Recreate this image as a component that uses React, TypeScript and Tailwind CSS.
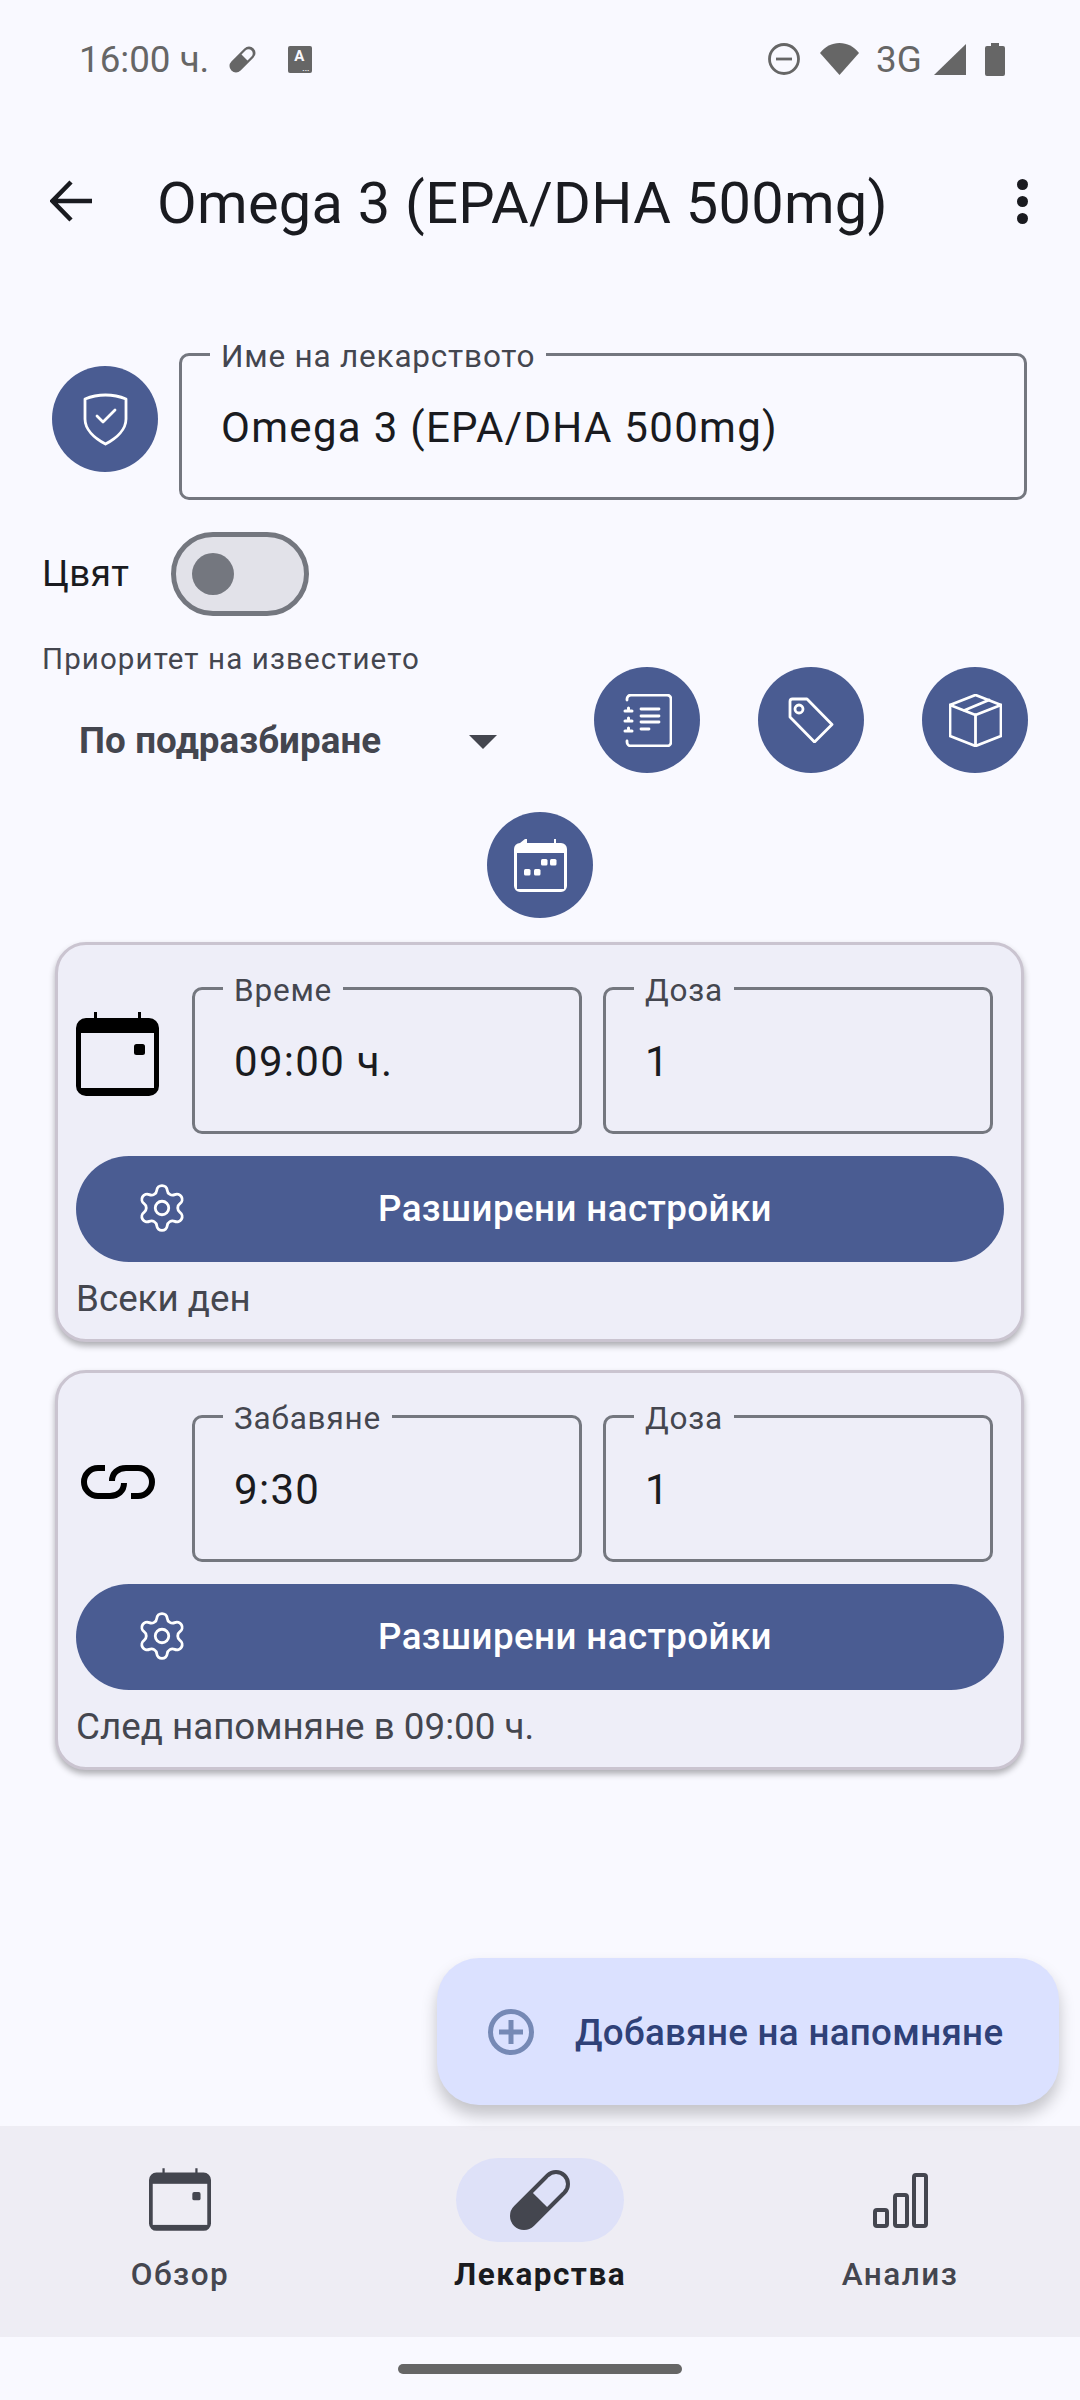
import { ReactNode } from 'react';
import { Settings } from 'lucide-react';

function CircleBtn({ children }: { children: ReactNode }) {
  return (
    <div className="flex h-[106px] w-[106px] shrink-0 items-center justify-center rounded-full bg-[#4a5c92]">
      {children}
    </div>
  );
}

function OutlinedField({ label, value, className, labelBg }: { label: string; value: string; className: string; labelBg: string }) {
  return (
    <div className={`relative flex h-[147px] items-center rounded-[10px] border-[3px] border-[#74777f] pl-[39px] pt-[2px] text-[42px] tracking-[1.3px] text-[#1a1b20] ${className}`}>
      <span className={`absolute left-[28px] top-[-19px] px-[11px] text-[31.5px] leading-[40px] tracking-[0.8px] text-[#44464f] ${labelBg}`}>{label}</span>
      {value}
    </div>
  );
}

function CalendarIcon({ className, color, inner }: { className: string; color: string; inner: string }) {
  return (
    <svg viewBox="0 0 83 84" className={className} fill="none">
      <path d="M18 0h3v6h41V0h3v6h8a10 10 0 0 1 10 10v58a10 10 0 0 1-10 10H10A10 10 0 0 1 0 74V16A10 10 0 0 1 10 6h8z" fill={color} />
      <rect x="5" y="21" width="73" height="55" fill={inner} />
      <rect x="58" y="32" width="11" height="11" rx="2.5" fill={color} />
    </svg>
  );
}

function GearBtn() {
  return (
    <div className="relative flex h-[106px] w-[928px] items-center justify-center rounded-full bg-[#4a5c92] pl-[70px] text-[36.75px] font-medium tracking-[0.4px] text-white">
      <Settings size={54} strokeWidth={1.25} className="absolute left-[59px] top-[25px]" />
      Разширени настройки
    </div>
  );
}

function ReminderCard({ icon, label, value, note }: { icon: ReactNode; label: string; value: string; note: string }) {
  return (
    <div className="ml-[55px] h-[400px] w-[969px] rounded-[31px] border-[3px] border-[#cac4d0] bg-[#eeeef8] pl-[18px] pt-[42px] shadow-[0_4px_6px_rgba(0,0,0,0.3)]">
      <div className="flex items-center">
        <div className="mb-[14px] flex w-[116px] shrink-0 justify-start">{icon}</div>
        <OutlinedField label={label} value={value} className="w-[390px]" labelBg="bg-[#eeeef8]" />
        <OutlinedField label="Доза" value="1" className="ml-[21px] w-[390px]" labelBg="bg-[#eeeef8]" />
      </div>
      <div className="mt-[22px]">
        <GearBtn />
      </div>
      <div className="mt-[13px] text-[36.75px] leading-[48px] text-[#44464f]">{note}</div>
    </div>
  );
}

function NavItem({ children, label, active }: { children: ReactNode; label: string; active?: boolean }) {
  return (
    <div className="flex flex-col items-center">
      <div className={`flex h-[84px] w-[168px] items-center justify-center rounded-full ${active ? 'bg-[#dee1f8]' : ''}`}>{children}</div>
      <div className={`mt-[13px] text-[31.5px] leading-[40px] tracking-[1.5px] ${active ? 'font-bold text-[#1a1b20]' : 'font-medium text-[#44464f]'}`}>{label}</div>
    </div>
  );
}

export default function App() {
  return (
    <div className="relative flex h-[2400px] w-[1080px] flex-col overflow-hidden bg-[#f9f9ff] font-['Roboto',sans-serif]">
      {/* status bar */}
      <div className="flex h-[118px] items-center pl-[79px] pr-[75px] text-[#666666]">
        <span className="pt-[2px] text-[36.75px] leading-none">16:00 ч.</span>
        <svg viewBox="0 0 27 27" className="ml-[20px] h-[27px] w-[27px]" fill="none">
          <path d="M7 20 20 7" stroke="#666666" strokeWidth="13" strokeLinecap="round" />
          <path d="M16.5 4.500a4.200 4.200 0 0 1 6 6l-4 4-6-6z" fill="#f9f9ff" />
        </svg>
        <div className="relative ml-[32px] h-[27px] w-[24px] rounded-[2px] bg-[#666666]">
          <span className="absolute left-[6px] top-[2px] text-[15px] font-bold leading-[17px] text-[#f9f9ff]">A</span>
          <span className="absolute bottom-[1px] right-[3px] text-[8px] font-bold leading-[6px] text-[#f9f9ff]">...</span>
        </div>
        <div className="ml-auto flex items-center">
          <svg viewBox="0 0 32 32" className="h-[32px] w-[32px]" fill="none" stroke="#666666" strokeWidth="2.8">
            <circle cx="16" cy="16" r="14.5" />
            <path d="M8 16h16" />
          </svg>
          <svg viewBox="0 0 39 32" className="ml-[20px] h-[32px] w-[39px]" fill="#666666">
            <path d="M0 10C5 3.500 12 0 19.500 0S34 3.500 39 10L19.500 32z" />
          </svg>
          <span className="ml-[17px] w-[48px] pt-[2px] text-[36.75px] leading-none">3G</span>
          <svg viewBox="0 0 32 31" className="ml-[10px] h-[31px] w-[32px]" fill="#666666">
            <path d="M32 0v31H0z" />
          </svg>
          <svg viewBox="0 0 20 33" className="ml-[19px] h-[33px] w-[20px]" fill="#666666">
            <path d="M6 0h8v3h4a2 2 0 0 1 2 2v26a2 2 0 0 1-2 2H2a2 2 0 0 1-2-2V5a2 2 0 0 1 2-2h4z" />
          </svg>
        </div>
      </div>

      {/* top bar */}
      <div className="flex h-[172px] items-center pl-[50px] pr-[50px] text-[#1a1b20]">
        <svg viewBox="0 0 42 42" className="mb-[6px] h-[42px] w-[42px]" fill="none" stroke="#1a1b20" strokeWidth="4.500">
          <path d="M42 21H4M21 2 2.500 21 21 40" />
        </svg>
        <span className="ml-[65px] text-[57.75px] leading-none tracking-[0.27px]">Omega 3 (EPA/DHA 500mg)</span>
        <div className="mb-[6px] ml-auto flex flex-col gap-[6px] pr-[2px]">
          <div className="h-[11px] w-[11px] rounded-full bg-[#1a1b20]" />
          <div className="h-[11px] w-[11px] rounded-full bg-[#1a1b20]" />
          <div className="h-[11px] w-[11px] rounded-full bg-[#1a1b20]" />
        </div>
      </div>

      {/* name */}
      <div className="mt-[63px] flex items-start pl-[52px]">
        <div className="mt-[13px]">
          <CircleBtn>
            <svg viewBox="0 0 45 53" className="h-[53px] w-[45px]" fill="none" stroke="#fff" strokeWidth="2.800" strokeLinecap="round" strokeLinejoin="round">
              <path d="M22.500 2C30 2 37 3.500 43 6v20c0 10-9 19-20.500 25C11 45 2 36 2 26V6c6-2.500 13-4 20.500-4z" />
              <path d="m14 23 6 6 12-12" />
            </svg>
          </CircleBtn>
        </div>
        <OutlinedField label="Име на лекарството" value="Omega 3 (EPA/DHA 500mg)" className="ml-[21px] w-[848px]" labelBg="bg-[#f9f9ff]" />
      </div>

      {/* colour switch */}
      <div className="mt-[32px] flex items-center pl-[42px]">
        <span className="w-[129px] text-[36.75px] tracking-[0.4px] text-[#1a1b20]">Цвят</span>
        <div className="flex h-[84px] w-[138px] items-center rounded-full border-[5px] border-[#74777f] bg-[#e2e2e9] pl-[16px]">
          <div className="h-[42px] w-[42px] rounded-full bg-[#74777f]" />
        </div>
      </div>

      {/* priority + actions */}
      <div className="mt-[23px] flex items-start">
        <div className="w-[594px] pl-[42px]">
          <div className="text-[29.5px] leading-[40px] tracking-[1.1px] text-[#44464f]">Приоритет на известието</div>
          <div className="mt-[42px] flex h-[40px] items-center pl-[37px]">
            <span className="text-[36.75px] font-bold leading-[40px] tracking-[0.1px] text-[#44464f]">По подразбиране</span>
            <div className="ml-[88px] mt-[1px] h-0 w-0 border-x-[14px] border-t-[14px] border-x-transparent border-t-[#44464f]" />
          </div>
        </div>
        <div className="mt-[28px] flex gap-[58px]">
          <CircleBtn>
            <svg viewBox="0 0 49 53" className="h-[53px] w-[49px]" fill="none" stroke="#fff" strokeWidth="2.800" strokeLinecap="round" strokeLinejoin="round">
              <path d="M4 6V5a4 4 0 0 1 4-4h36a4 4 0 0 1 4 4v43a4 4 0 0 1-4 4H8a4 4 0 0 1-4-4v-1" />
              <path d="M18 15h18M18 22h18M18 28h18M18 35h8" />
              <path d="M2 17h7M2 27h7M2 37h7M5.500 14v1M5.500 24v1M5.500 34v1" strokeWidth="3" />
            </svg>
          </CircleBtn>
          <CircleBtn>
            <svg viewBox="0 0 46 46" className="h-[46px] w-[46px]" fill="none" stroke="#fff" strokeWidth="2.800" strokeLinecap="round" strokeLinejoin="round">
              <path d="M2 4.500a2.500 2.500 0 0 1 2.500-2.500H19l25 25.500L26.500 45 2 20z" />
              <circle cx="11" cy="12" r="4" />
            </svg>
          </CircleBtn>
          <CircleBtn>
            <svg viewBox="0 0 53 53" className="h-[53px] w-[53px]" fill="none" stroke="#fff" strokeWidth="2.800" strokeLinecap="round" strokeLinejoin="round">
              <path d="M26.500 1 52 11v31L26.500 52 1 42V11z" />
              <path d="m1 11 25.500 10L52 11M26.500 21v31M15 16.500 40 6" />
            </svg>
          </CircleBtn>
        </div>
      </div>

      {/* schedule */}
      <div className="mt-[39px] flex justify-center">
        <CircleBtn>
          <svg viewBox="0 0 53 53" className="h-[53px] w-[53px]" fill="none">
            <path d="M11 0h2v4h27V0h2v4h5a6 6 0 0 1 6 6v37a6 6 0 0 1-6 6H6a6 6 0 0 1-6-6V10a6 6 0 0 1 6-6z" fill="#fff" />
            <rect x="3" y="14" width="47" height="36" fill="#4a5c92" />
            <rect x="10" y="30" width="6.500" height="6.500" rx="1.500" fill="#fff" />
            <rect x="20" y="30" width="6.500" height="6.500" rx="1.500" fill="#fff" />
            <rect x="27" y="20" width="6.500" height="6.500" rx="1.500" fill="#fff" />
            <rect x="36" y="20" width="6.500" height="6.500" rx="1.500" fill="#fff" />
          </svg>
        </CircleBtn>
      </div>

      {/* reminders */}
      <div className="mt-[24px] flex flex-col gap-[28px]">
        <ReminderCard
          icon={<CalendarIcon className="h-[84px] w-[83px]" color="#000" inner="#eeeef8" />}
          label="Време"
          value="09:00 ч."
          note="Всеки ден"
        />
        <ReminderCard
          icon={
            <svg viewBox="0 0 74 34" className="ml-[5px] h-[34px] w-[74px]" fill="none" stroke="#000" strokeWidth="6">
              <path d="M24 3H17a14 14 0 0 0 0 28h12c8 0 14-5 14-13M50 31h7a14 14 0 0 0 0-28H45c-8 0-14 5-14 13" />
            </svg>
          }
          label="Забавяне"
          value="9:30"
          note="След напомняне в 09:00 ч."
        />
      </div>

      {/* bottom nav */}
      <div className="mt-auto grid h-[211px] grid-cols-3 bg-[#eeedf4] pt-[32px]">
        <NavItem label="Обзор">
          <CalendarIcon className="mb-[2px] h-[63px] w-[62px]" color="#44464f" inner="#eeedf4" />
        </NavItem>
        <NavItem label="Лекарства" active>
          <svg viewBox="0 0 60 60" className="h-[60px] w-[60px]" fill="none">
            <path d="M14 46 46 14" stroke="#44464f" strokeWidth="28" strokeLinecap="round" />
            <path d="M30 30 46 14" stroke="#dee1f8" strokeWidth="20" />
            <circle cx="46" cy="14" r="10" fill="#dee1f8" />
          </svg>
        </NavItem>
        <NavItem label="Анализ">
          <svg viewBox="0 0 55 55" className="h-[55px] w-[55px]" fill="none" stroke="#44464f" strokeWidth="4">
            <rect x="2" y="37" width="12" height="16" rx="2" />
            <rect x="22" y="22" width="12" height="31" rx="2" />
            <rect x="41" y="2" width="12" height="51" rx="2" />
          </svg>
        </NavItem>
      </div>
      <div className="flex h-[63px] items-center justify-center">
        <div className="h-[10px] w-[284px] rounded-full bg-[#666666]" />
      </div>

      {/* add reminder */}
      <div className="absolute left-[437px] top-[1958px] flex h-[147px] w-[622px] items-center rounded-[42px] bg-[#dbe1ff] pl-[51px] shadow-[0_10px_16px_rgba(0,0,0,0.22)]">
        <svg viewBox="0 0 46 46" className="h-[46px] w-[46px]" fill="none" stroke="#7689b5" strokeWidth="5">
          <circle cx="23" cy="23" r="20.500" />
          <path d="M23 11v24M11 23h24" />
        </svg>
        <span className="ml-[41px] pt-[2px] text-[36.75px] font-medium tracking-[0.3px] text-[#2f4178]">Добавяне на напомняне</span>
      </div>
    </div>
  );
}
